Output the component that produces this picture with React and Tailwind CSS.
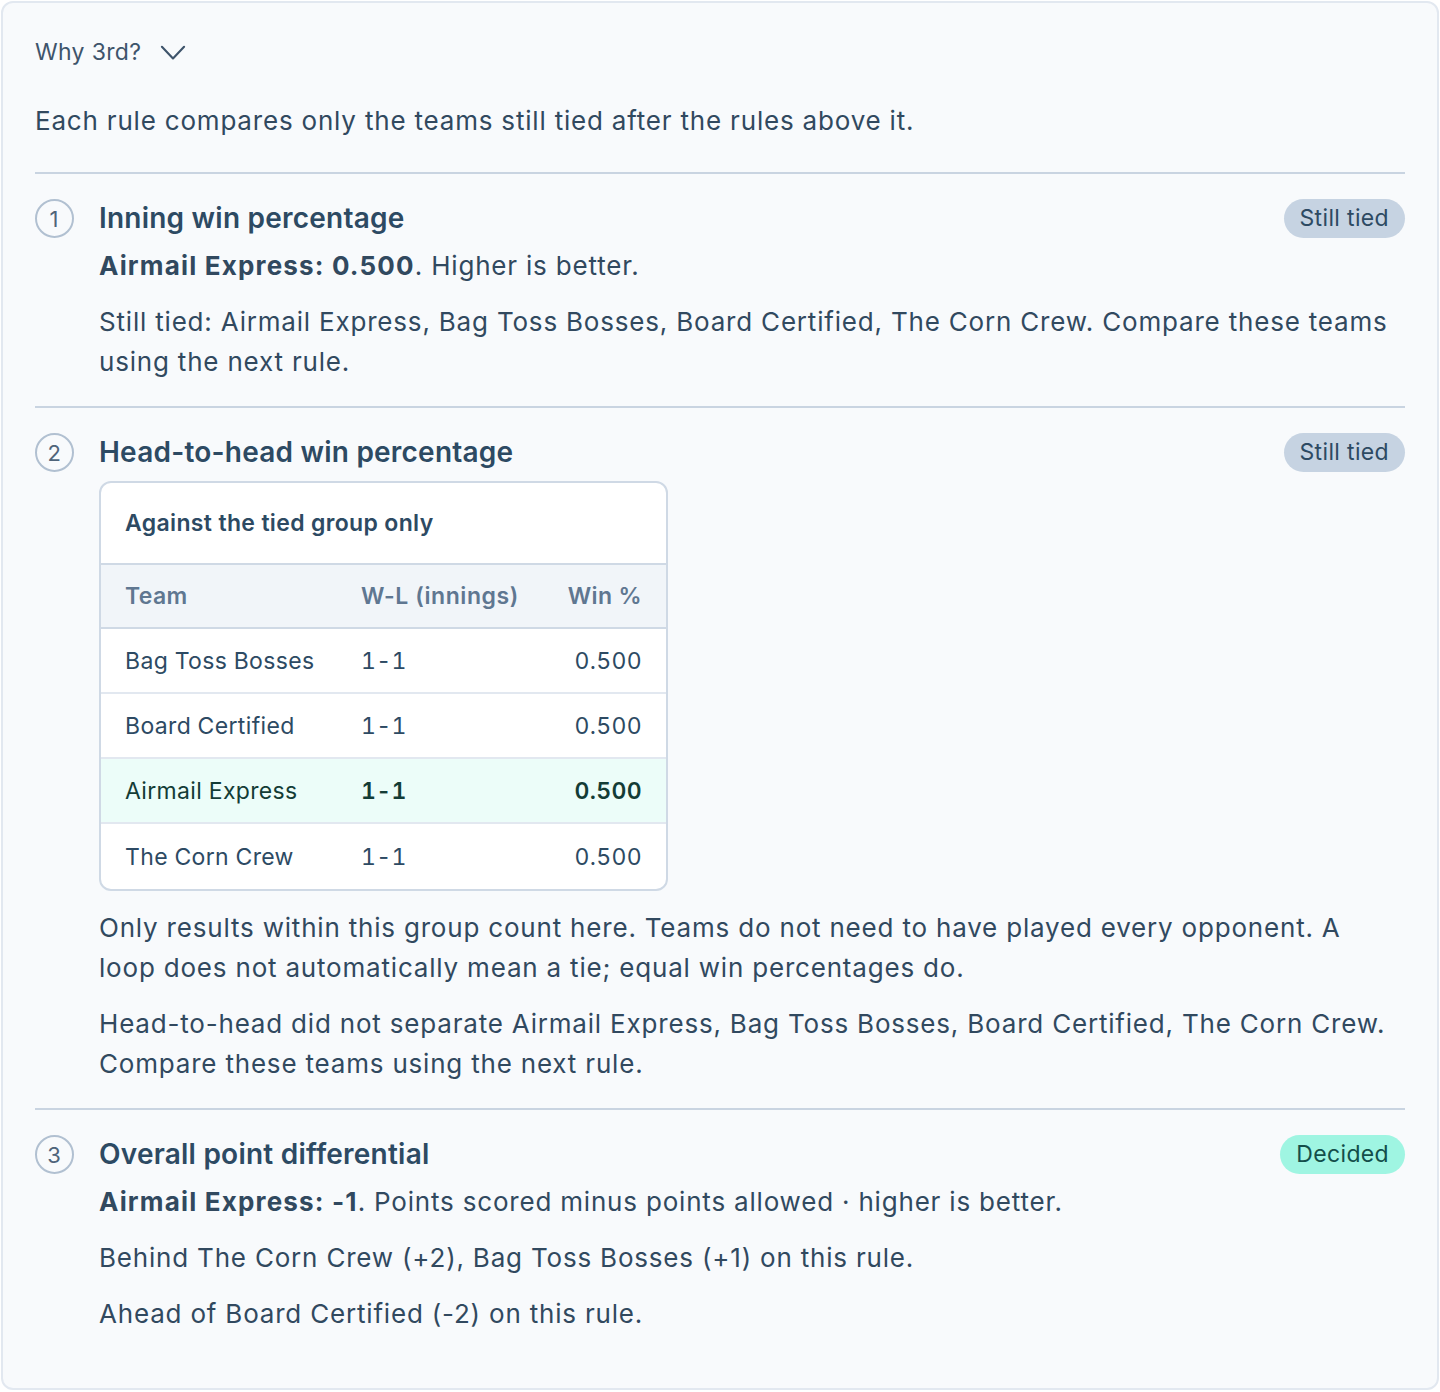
import React from 'react';

const rows = [
    { team: 'Bag Toss Bosses', wl: '1-1', pct: '0.500' },
    { team: 'Board Certified', wl: '1-1', pct: '0.500' },
    { team: 'Airmail Express', wl: '1-1', pct: '0.500', mine: true },
    { team: 'The Corn Crew', wl: '1-1', pct: '0.500' },
];

function Badge({ decided, children }) {
    return (
        <span
            className={
                'shrink-0 rounded-full px-4 h-[39px] flex items-center text-[23px] tracking-[0.015em] leading-none ' +
                (decided ? 'bg-[#9ff5e2] text-[#134e4a]' : 'bg-[#c6d3e2] text-[#2d4a63]')
            }
        >
            {children}
        </span>
    );
}

function Rule({ n, title, status, decided, children }) {
    return (
        <section className="flex gap-[25px] pt-[25px] pb-[24px]">
            <div className="w-[39px] h-[39px] shrink-0 rounded-full border-2 border-[#b1c0d1] flex items-center justify-center text-[22px] text-[#4f647a]">
                {n}
            </div>
            <div className="flex-1 min-w-0">
                <div className="flex items-start justify-between">
                    <h3 className="text-[28px] tracking-[0.008em] leading-[36px] font-semibold text-[#2d4a63] pt-px">{title}</h3>
                    <Badge decided={decided}>{status}</Badge>
                </div>
                <div className="flex flex-col gap-4 mt-[8px]">{children}</div>
            </div>
        </section>
    );
}

function HeadToHead() {
    return (
        <div className="w-[569px] mt-[1px] mb-[1px] rounded-[12px] border-2 border-[#cfd9e5] bg-white overflow-hidden text-[23px] tracking-[0.015em]">
            <div className="h-[80px] px-[24px] flex items-center font-semibold text-[#2d4a63]">
                Against the tied group only
            </div>
            <div className="grid grid-cols-[236px_1fr_auto] px-[24px] h-[66px] items-center bg-[#f1f5f9] border-y-2 border-[#cfd9e5] font-semibold text-[#5f7791]">
                <span>Team</span>
                <span className="tracking-[0.025em]">W-L (innings)</span>
                <span>Win %</span>
            </div>
            {rows.map((r, i) => (
                <div
                    key={r.team}
                    className={
                        'grid grid-cols-[236px_1fr_auto] px-[24px] h-[65px] items-center tabular-nums ' +
                        (i < rows.length - 1 ? 'border-b-2 border-[#e2e8f0] ' : '') +
                        (r.mine ? 'bg-[#ecfdf9] text-[#133c36]' : 'text-[#2d4a63]')
                    }
                >
                    <span>{r.team}</span>
                    <span className={r.mine ? 'font-semibold' : ''}>{r.wl}</span>
                    <span className={r.mine ? 'font-semibold' : ''}>{r.pct}</span>
                </div>
            ))}
        </div>
    );
}

export default function App() {
    return (
        <div className="min-h-screen bg-white p-px font-['Inter',sans-serif]">
            <div className="rounded-[12px] border-2 border-[#e2e8f0] bg-[#f8fafc] px-8 pt-[32px] pb-[30px] text-[#31495f]">
                <button className="flex items-center gap-[18px] text-[23px] tracking-[0.015em] leading-[34px] text-[#3e546b]">
                    Why 3rd?
                    <svg width="28" height="28" viewBox="0 0 24 24" fill="none" stroke="currentColor" strokeWidth="1.8" strokeLinecap="round" strokeLinejoin="round">
                        <path d="M2.5 7.5l9.5 10 9.5-10" />
                    </svg>
                </button>
                <p className="mt-[32px] text-[26px] tracking-[0.031em] leading-[40px]">
                    Each rule compares only the teams still tied after the rules above it.
                </p>

                <div className="mt-[31px] border-t-2 border-[#c9d4e1] divide-y-2 divide-[#c9d4e1] text-[26px] tracking-[0.031em] leading-[40px]">
                    <Rule n="1" title="Inning win percentage" status="Still tied">
                        <p>
                            <strong className="font-bold tracking-[0.045em]">Airmail Express: 0.500</strong>. Higher is better.
                        </p>
                        <p>
                            Still tied: Airmail Express, Bag Toss Bosses, Board Certified, The Corn Crew. Compare these teams using the next rule.
                        </p>
                    </Rule>
                    <Rule n="2" title="Head-to-head win percentage" status="Still tied">
                        <HeadToHead />
                        <p>
                            Only results within this group count here. Teams do not need to have played every opponent. A loop does not automatically mean a tie; equal win percentages do.
                        </p>
                        <p>
                            Head-to-head did not separate Airmail Express, Bag Toss Bosses, Board Certified, The Corn Crew. Compare these teams using the next rule.
                        </p>
                    </Rule>
                    <Rule n="3" title="Overall point differential" status="Decided" decided>
                        <p>
                            <strong className="font-bold tracking-[0.045em]">Airmail Express: -1</strong>. Points scored minus points allowed · higher is better.
                        </p>
                        <p>Behind The Corn Crew (+2), Bag Toss Bosses (+1) on this rule.</p>
                        <p>Ahead of Board Certified (-2) on this rule.</p>
                    </Rule>
                </div>
            </div>
        </div>
    );
}
